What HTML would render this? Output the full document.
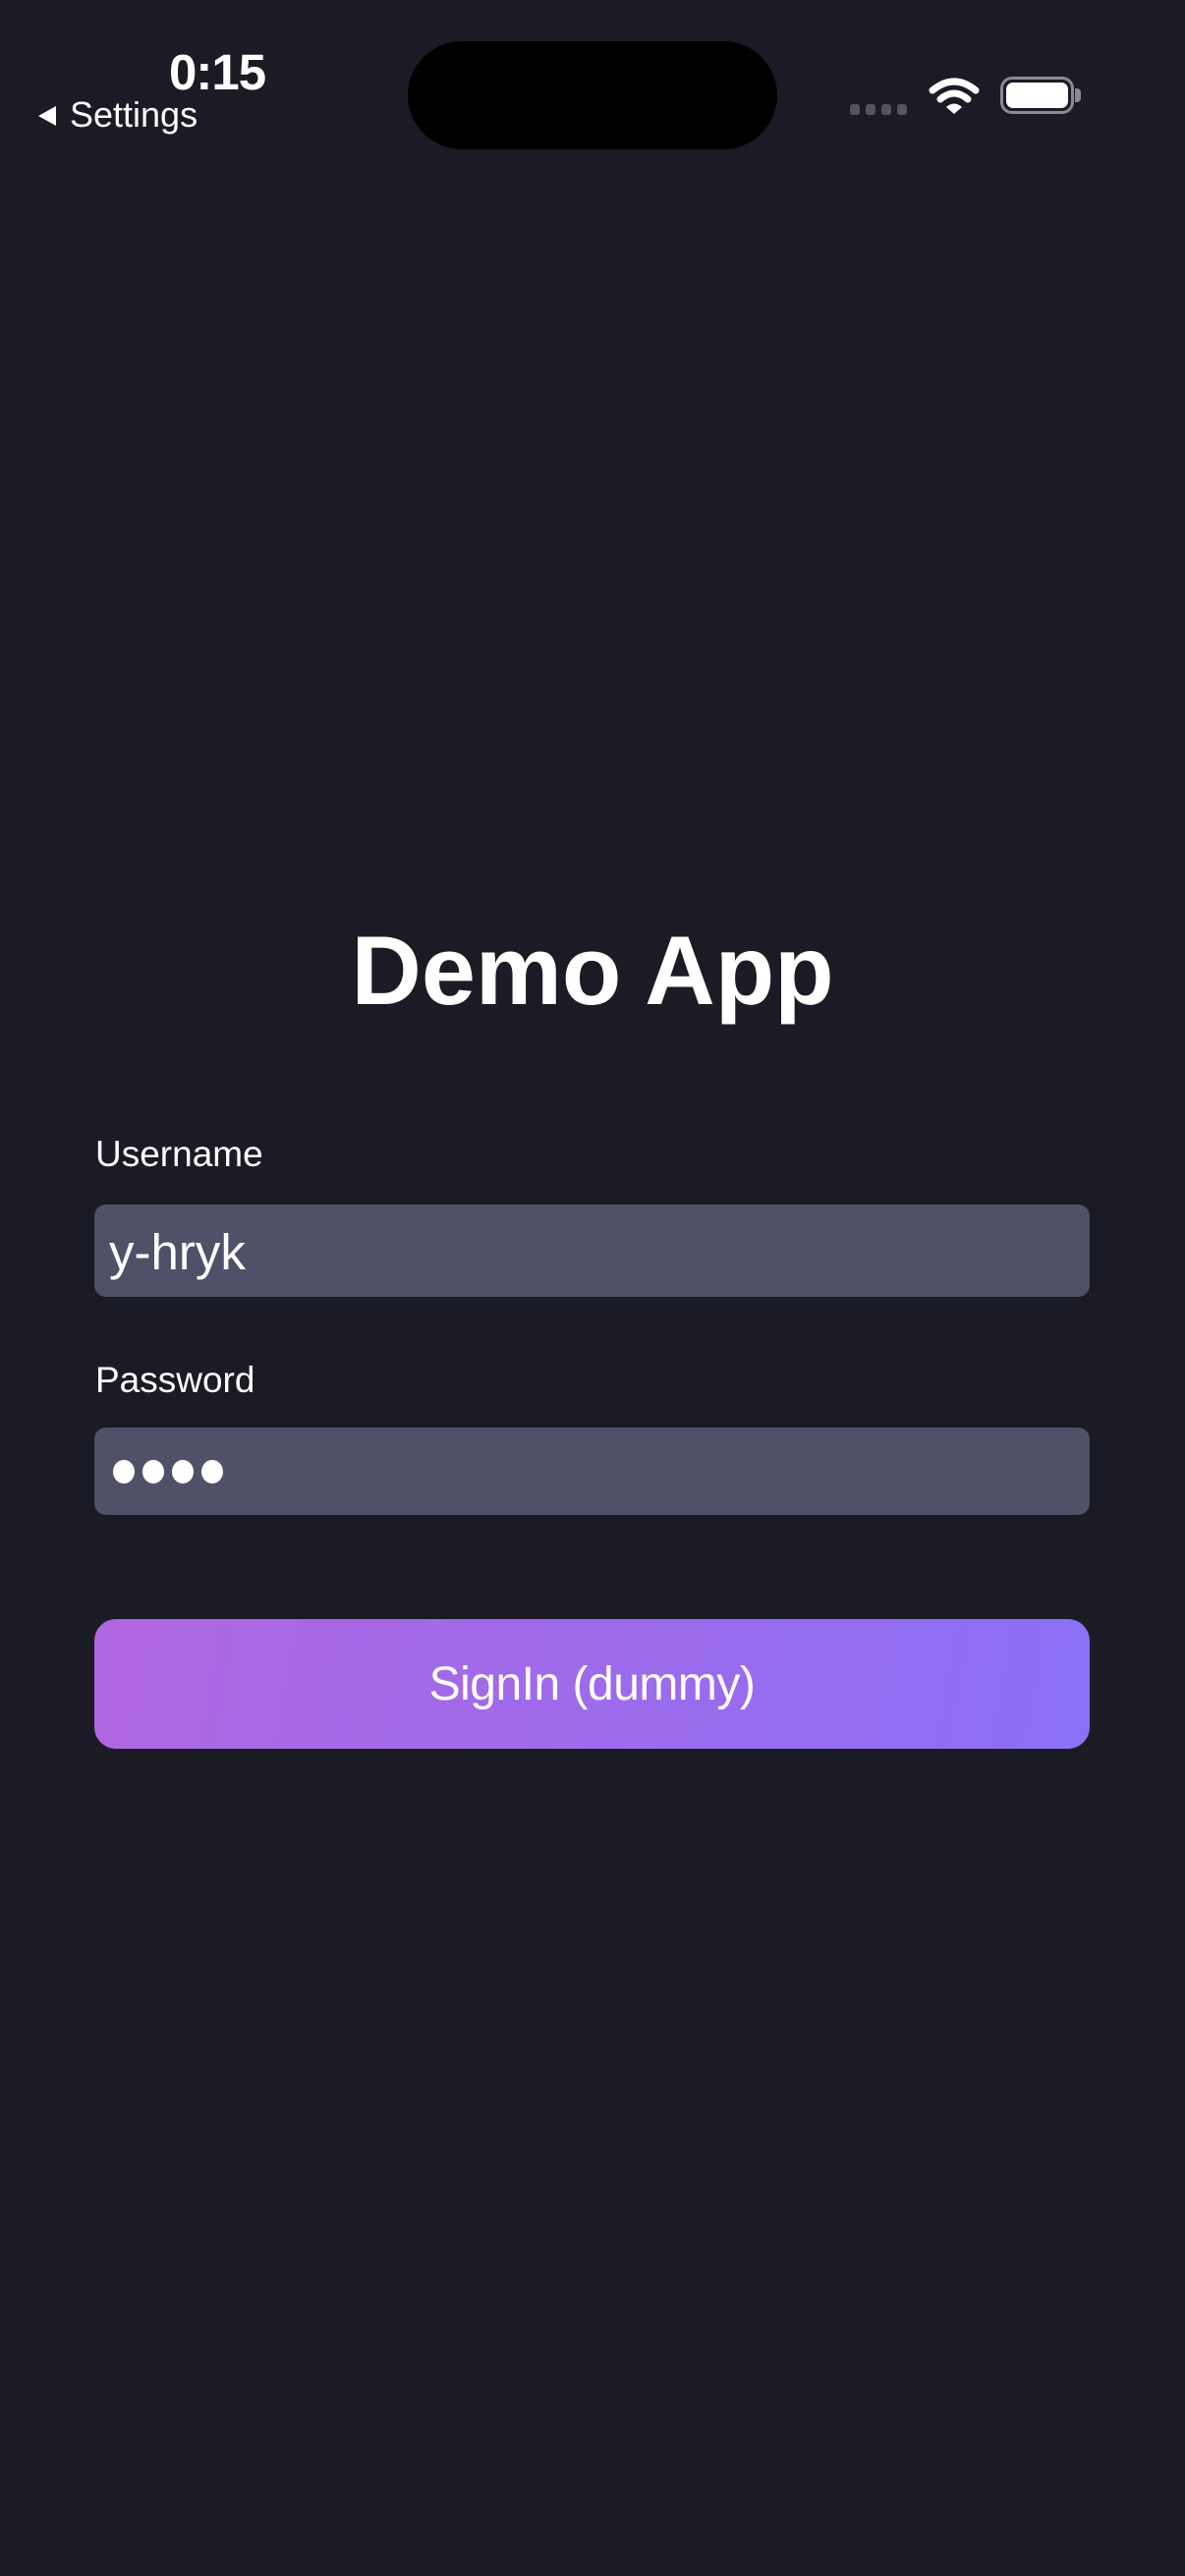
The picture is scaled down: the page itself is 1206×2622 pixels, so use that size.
<!DOCTYPE html>
<html><head><meta charset="utf-8"><style>
*{margin:0;padding:0;box-sizing:border-box}
html,body{width:1206px;height:2622px;background:#1b1b25;overflow:hidden;font-family:"Liberation Sans",sans-serif;color:#fff}
.abs{position:absolute}
</style></head><body>
<div class="abs" style="left:172px;top:46px;font-size:51px;font-weight:bold;letter-spacing:-1px;line-height:56px">0:15</div>
<svg class="abs" style="left:37px;top:106px" width="24" height="24" viewBox="0 0 24 24"><path d="M2 12 L20 2 V22 Z" fill="#fff"/></svg>
<div class="abs" style="left:71px;top:97px;font-size:36px;line-height:40px">Settings</div>
<div class="abs" style="left:415px;top:42px;width:376px;height:110px;border-radius:55px;background:#000"></div>
<svg class="abs" style="left:865px;top:106px" width="58" height="11"><g fill="#55555f"><rect x="0" y="0" width="10" height="11" rx="3"/><rect x="16" y="0" width="10" height="11" rx="3"/><rect x="32" y="0" width="10" height="11" rx="3"/><rect x="48" y="0" width="10" height="11" rx="3"/></g></svg>
<svg class="abs" style="left:944px;top:78px" width="54" height="40" viewBox="0 0 54 40"><g fill="none" stroke="#fff" stroke-width="7" stroke-linecap="round"><path d="M5 14 Q27 -4 49 14"/><path d="M13 23 Q27 11 41 23"/></g><path d="M19 31 Q27 24 35 31 L27 38 Z" fill="#fff"/></svg>
<div class="abs" style="left:1018px;top:78px;width:75px;height:38px;border:3px solid #8a8a90;border-radius:12px;padding:3px"><div style="width:100%;height:100%;background:#fff;border-radius:7px"></div></div>
<div class="abs" style="left:1094px;top:90px;width:6px;height:14px;background:#8a8a90;border-radius:0 4px 4px 0"></div>

<div class="abs" style="left:0;width:1206px;top:928px;text-align:center;font-size:99px;font-weight:bold;line-height:120px">Demo App</div>

<div class="abs" style="left:97px;top:1150px;font-size:37px;line-height:50px">Username</div>
<div class="abs" style="left:96px;top:1226px;width:1013px;height:94px;background:#505068;border-radius:12px"></div>
<div class="abs" style="left:111px;top:1240px;font-size:51px;line-height:70px">y-hryk</div>
<div class="abs" style="left:97px;top:1380px;font-size:37px;line-height:50px">Password</div>
<div class="abs" style="left:96px;top:1453px;width:1013px;height:89px;background:#505068;border-radius:12px"></div>
<svg class="abs" style="left:114px;top:1484px" width="120" height="28"><g fill="#fff"><ellipse cx="12" cy="14" rx="11" ry="12"/><ellipse cx="42" cy="14" rx="11" ry="12"/><ellipse cx="72" cy="14" rx="11" ry="12"/><ellipse cx="102" cy="14" rx="11" ry="12"/></g></svg>

<div class="abs" style="left:96px;top:1648px;width:1013px;height:132px;border-radius:22px;background:linear-gradient(100deg,#b066e0,#8b70f6);display:flex;align-items:center;justify-content:center;font-size:48px;letter-spacing:-0.5px">SignIn (dummy)</div>
</body></html>
